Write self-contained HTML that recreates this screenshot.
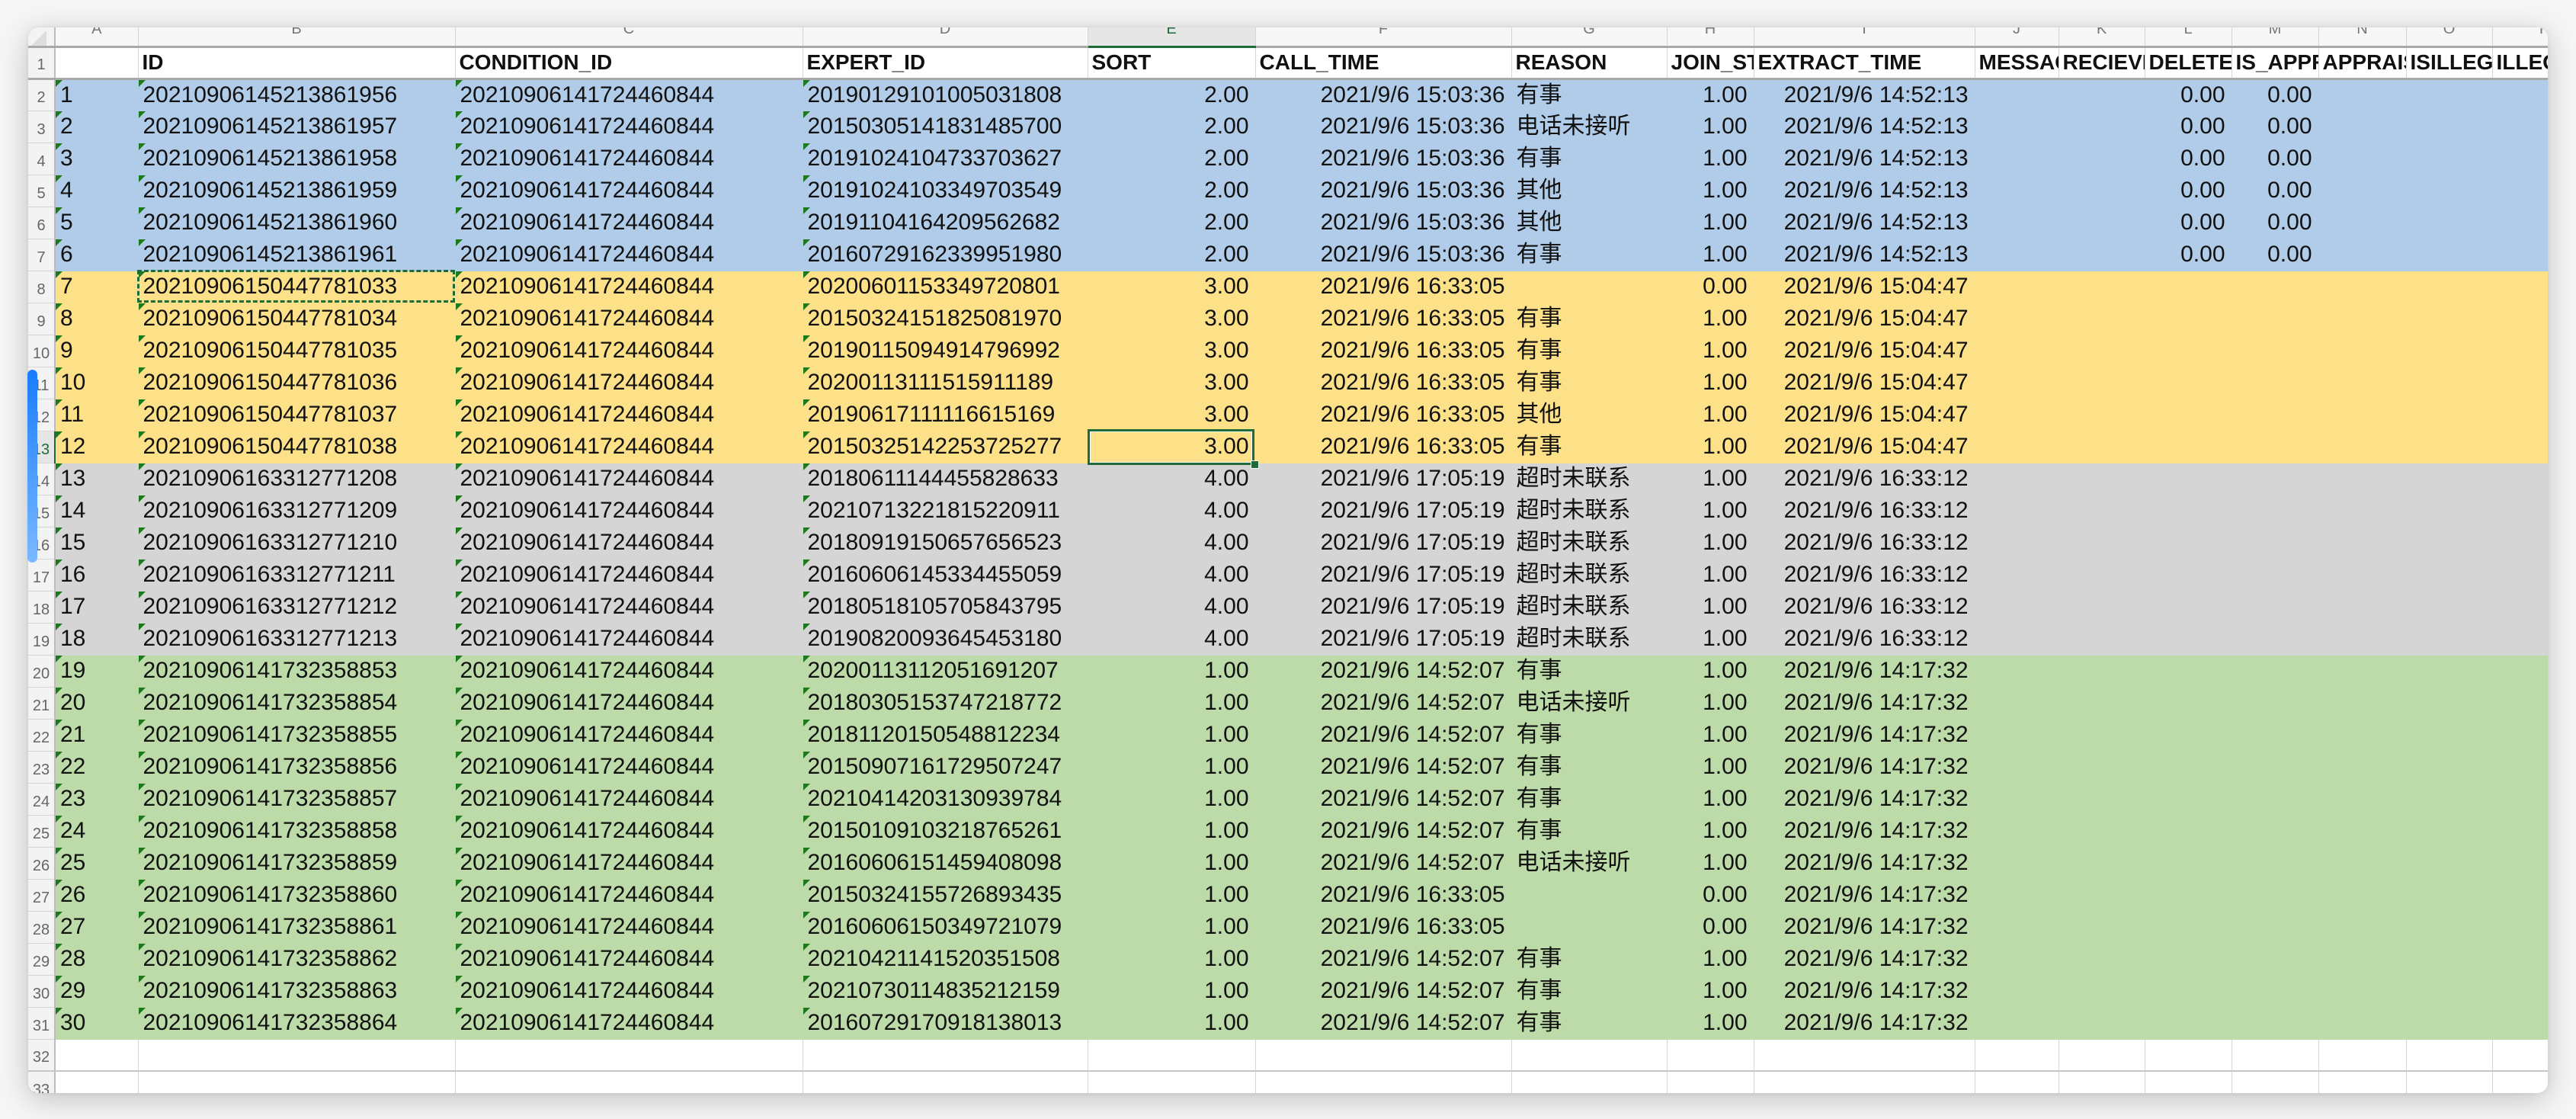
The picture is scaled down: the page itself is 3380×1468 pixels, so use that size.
<!DOCTYPE html>
<html><head><meta charset="utf-8">
<style>
html,body{margin:0;padding:0;background:#f6f6f6;width:3380px;height:1468px;overflow:hidden}
#win{position:absolute;left:37px;top:36px;width:3306px;height:1398px;background:#fff;border-radius:14px;overflow:hidden;box-shadow:0 8px 40px rgba(0,0,0,.22),0 0 6px rgba(0,0,0,.08)}
table{border-collapse:collapse;table-layout:fixed;width:3370px;font-family:"Liberation Sans","Noto Sans CJK SC",sans-serif;font-size:30px;color:#111}
td,th{padding:0 6px;white-space:nowrap;overflow:hidden;border-right:1px solid #d6d6d6;border-bottom:1px solid #d6d6d6;height:0;line-height:30px;position:relative;font-weight:normal;text-align:left;vertical-align:middle}
tr{height:42px}
th{background:#f3f3f3;color:#666;font-size:20px;text-align:center;vertical-align:bottom;line-height:20px;padding:0 0 7px 0;border-right:2px solid #bcbcbc}
tr.c{height:25px}
tr.c td{line-height:20px;background:#f7f7f7;color:#777;font-size:20px;text-align:center;border-bottom:3px solid #a9a9a9;vertical-align:top;padding:0}
tr.c td span{position:relative;top:-8px}
tr.c th{border-bottom:3px solid #a9a9a9;background:#f3f3f3;padding:0}
tr.c td.se{background:#e6e6e6;color:#1e6b3a;border-bottom:3px solid #1e6b3a}
tr.h td{font-weight:bold;font-size:28px;border-bottom:3px solid #a9a9a9;padding-left:5px}
tr.h th{border-bottom:3px solid #a9a9a9}
td.r{text-align:right;padding-right:8px}
td.t::before{content:"";position:absolute;left:0;top:0;border-top:9px solid #1c7a1c;border-right:9px solid transparent}
tr.b td{background:#b0cce8;border-color:#b0cce8}
tr.y td{background:#fde188;border-color:#fde188}
tr.g td{background:#d5d5d5;border-color:#d5d5d5}
tr.n td{background:#bcdba8;border-color:#bcdba8}
th.sr{color:#1e6b3a;border-right:2px solid #1e6b3a;background:#e6e6e6}
tr.w32 td,tr.w32 th{border-bottom:2px solid #c6c6c6}
#bar{position:absolute;left:36px;top:485px;width:13px;height:253px;border-radius:7px;background:linear-gradient(#1a7cff,#7ab9ff)}
#dash{position:absolute;left:180px;top:354px;width:411px;height:37px;border:3px dashed #1e6b3a}
#sel{position:absolute;left:1427px;top:563px;width:213px;height:41px;border:3px solid #1f6b3a;box-shadow:inset 0 0 0 1px #fff}
#hdl{position:absolute;left:1641px;top:604px;width:9px;height:9px;background:#1f6b3a;border:1px solid #fff}
#corner{position:absolute;left:4px;top:4px;width:0;height:0;border-bottom:20px solid #ddd;border-left:20px solid transparent;z-index:2}
</style></head><body>
<div id="win">
<div id="corner"></div>
<table>
<colgroup><col style="width:35px"><col style="width:109px"><col style="width:416px"><col style="width:456px"><col style="width:374px"><col style="width:220px"><col style="width:336px"><col style="width:204px"><col style="width:114px"><col style="width:290px"><col style="width:110px"><col style="width:113px"><col style="width:114px"><col style="width:114px"><col style="width:115px"><col style="width:113px"><col style="width:137px"></colgroup>
<tr class="c"><th></th><td><span>A</span></td><td><span>B</span></td><td><span>C</span></td><td><span>D</span></td><td class="se"><span>E</span></td><td><span>F</span></td><td><span>G</span></td><td><span>H</span></td><td><span>I</span></td><td><span>J</span></td><td><span>K</span></td><td><span>L</span></td><td><span>M</span></td><td><span>N</span></td><td><span>O</span></td><td><span>P</span></td></tr>
<tr class="h"><th>1</th><td></td><td>ID</td><td>CONDITION_ID</td><td>EXPERT_ID</td><td>SORT</td><td>CALL_TIME</td><td>REASON</td><td>JOIN_STATUS</td><td>EXTRACT_TIME</td><td>MESSAGE</td><td>RECIEVE_</td><td>DELETE_FLAG</td><td>IS_APPRAISE</td><td>APPRAISE</td><td>ISILLEGAL</td><td>ILLEGAL</td></tr>
<tr class="b"><th>2</th><td class="t">1</td><td class="t">20210906145213861956</td><td class="t">20210906141724460844</td><td class="t">20190129101005031808</td><td class="r">2.00</td><td class="r">2021/9/6 15:03:36</td><td>有事</td><td class="r">1.00</td><td class="r">2021/9/6 14:52:13</td><td></td><td></td><td class="r">0.00</td><td class="r">0.00</td><td></td><td></td><td></td></tr>
<tr class="b"><th>3</th><td class="t">2</td><td class="t">20210906145213861957</td><td class="t">20210906141724460844</td><td class="t">20150305141831485700</td><td class="r">2.00</td><td class="r">2021/9/6 15:03:36</td><td>电话未接听</td><td class="r">1.00</td><td class="r">2021/9/6 14:52:13</td><td></td><td></td><td class="r">0.00</td><td class="r">0.00</td><td></td><td></td><td></td></tr>
<tr class="b"><th>4</th><td class="t">3</td><td class="t">20210906145213861958</td><td class="t">20210906141724460844</td><td class="t">20191024104733703627</td><td class="r">2.00</td><td class="r">2021/9/6 15:03:36</td><td>有事</td><td class="r">1.00</td><td class="r">2021/9/6 14:52:13</td><td></td><td></td><td class="r">0.00</td><td class="r">0.00</td><td></td><td></td><td></td></tr>
<tr class="b"><th>5</th><td class="t">4</td><td class="t">20210906145213861959</td><td class="t">20210906141724460844</td><td class="t">20191024103349703549</td><td class="r">2.00</td><td class="r">2021/9/6 15:03:36</td><td>其他</td><td class="r">1.00</td><td class="r">2021/9/6 14:52:13</td><td></td><td></td><td class="r">0.00</td><td class="r">0.00</td><td></td><td></td><td></td></tr>
<tr class="b"><th>6</th><td class="t">5</td><td class="t">20210906145213861960</td><td class="t">20210906141724460844</td><td class="t">20191104164209562682</td><td class="r">2.00</td><td class="r">2021/9/6 15:03:36</td><td>其他</td><td class="r">1.00</td><td class="r">2021/9/6 14:52:13</td><td></td><td></td><td class="r">0.00</td><td class="r">0.00</td><td></td><td></td><td></td></tr>
<tr class="b"><th>7</th><td class="t">6</td><td class="t">20210906145213861961</td><td class="t">20210906141724460844</td><td class="t">20160729162339951980</td><td class="r">2.00</td><td class="r">2021/9/6 15:03:36</td><td>有事</td><td class="r">1.00</td><td class="r">2021/9/6 14:52:13</td><td></td><td></td><td class="r">0.00</td><td class="r">0.00</td><td></td><td></td><td></td></tr>
<tr class="y"><th>8</th><td class="t">7</td><td class="t">20210906150447781033</td><td class="t">20210906141724460844</td><td class="t">20200601153349720801</td><td class="r">3.00</td><td class="r">2021/9/6 16:33:05</td><td></td><td class="r">0.00</td><td class="r">2021/9/6 15:04:47</td><td></td><td></td><td></td><td></td><td></td><td></td><td></td></tr>
<tr class="y"><th>9</th><td class="t">8</td><td class="t">20210906150447781034</td><td class="t">20210906141724460844</td><td class="t">20150324151825081970</td><td class="r">3.00</td><td class="r">2021/9/6 16:33:05</td><td>有事</td><td class="r">1.00</td><td class="r">2021/9/6 15:04:47</td><td></td><td></td><td></td><td></td><td></td><td></td><td></td></tr>
<tr class="y"><th>10</th><td class="t">9</td><td class="t">20210906150447781035</td><td class="t">20210906141724460844</td><td class="t">20190115094914796992</td><td class="r">3.00</td><td class="r">2021/9/6 16:33:05</td><td>有事</td><td class="r">1.00</td><td class="r">2021/9/6 15:04:47</td><td></td><td></td><td></td><td></td><td></td><td></td><td></td></tr>
<tr class="y"><th>11</th><td class="t">10</td><td class="t">20210906150447781036</td><td class="t">20210906141724460844</td><td class="t">20200113111515911189</td><td class="r">3.00</td><td class="r">2021/9/6 16:33:05</td><td>有事</td><td class="r">1.00</td><td class="r">2021/9/6 15:04:47</td><td></td><td></td><td></td><td></td><td></td><td></td><td></td></tr>
<tr class="y"><th>12</th><td class="t">11</td><td class="t">20210906150447781037</td><td class="t">20210906141724460844</td><td class="t">20190617111116615169</td><td class="r">3.00</td><td class="r">2021/9/6 16:33:05</td><td>其他</td><td class="r">1.00</td><td class="r">2021/9/6 15:04:47</td><td></td><td></td><td></td><td></td><td></td><td></td><td></td></tr>
<tr class="y"><th class="sr">13</th><td class="t">12</td><td class="t">20210906150447781038</td><td class="t">20210906141724460844</td><td class="t">20150325142253725277</td><td class="r">3.00</td><td class="r">2021/9/6 16:33:05</td><td>有事</td><td class="r">1.00</td><td class="r">2021/9/6 15:04:47</td><td></td><td></td><td></td><td></td><td></td><td></td><td></td></tr>
<tr class="g"><th>14</th><td class="t">13</td><td class="t">20210906163312771208</td><td class="t">20210906141724460844</td><td class="t">20180611144455828633</td><td class="r">4.00</td><td class="r">2021/9/6 17:05:19</td><td>超时未联系</td><td class="r">1.00</td><td class="r">2021/9/6 16:33:12</td><td></td><td></td><td></td><td></td><td></td><td></td><td></td></tr>
<tr class="g"><th>15</th><td class="t">14</td><td class="t">20210906163312771209</td><td class="t">20210906141724460844</td><td class="t">20210713221815220911</td><td class="r">4.00</td><td class="r">2021/9/6 17:05:19</td><td>超时未联系</td><td class="r">1.00</td><td class="r">2021/9/6 16:33:12</td><td></td><td></td><td></td><td></td><td></td><td></td><td></td></tr>
<tr class="g"><th>16</th><td class="t">15</td><td class="t">20210906163312771210</td><td class="t">20210906141724460844</td><td class="t">20180919150657656523</td><td class="r">4.00</td><td class="r">2021/9/6 17:05:19</td><td>超时未联系</td><td class="r">1.00</td><td class="r">2021/9/6 16:33:12</td><td></td><td></td><td></td><td></td><td></td><td></td><td></td></tr>
<tr class="g"><th>17</th><td class="t">16</td><td class="t">20210906163312771211</td><td class="t">20210906141724460844</td><td class="t">20160606145334455059</td><td class="r">4.00</td><td class="r">2021/9/6 17:05:19</td><td>超时未联系</td><td class="r">1.00</td><td class="r">2021/9/6 16:33:12</td><td></td><td></td><td></td><td></td><td></td><td></td><td></td></tr>
<tr class="g"><th>18</th><td class="t">17</td><td class="t">20210906163312771212</td><td class="t">20210906141724460844</td><td class="t">20180518105705843795</td><td class="r">4.00</td><td class="r">2021/9/6 17:05:19</td><td>超时未联系</td><td class="r">1.00</td><td class="r">2021/9/6 16:33:12</td><td></td><td></td><td></td><td></td><td></td><td></td><td></td></tr>
<tr class="g"><th>19</th><td class="t">18</td><td class="t">20210906163312771213</td><td class="t">20210906141724460844</td><td class="t">20190820093645453180</td><td class="r">4.00</td><td class="r">2021/9/6 17:05:19</td><td>超时未联系</td><td class="r">1.00</td><td class="r">2021/9/6 16:33:12</td><td></td><td></td><td></td><td></td><td></td><td></td><td></td></tr>
<tr class="n"><th>20</th><td class="t">19</td><td class="t">20210906141732358853</td><td class="t">20210906141724460844</td><td class="t">20200113112051691207</td><td class="r">1.00</td><td class="r">2021/9/6 14:52:07</td><td>有事</td><td class="r">1.00</td><td class="r">2021/9/6 14:17:32</td><td></td><td></td><td></td><td></td><td></td><td></td><td></td></tr>
<tr class="n"><th>21</th><td class="t">20</td><td class="t">20210906141732358854</td><td class="t">20210906141724460844</td><td class="t">20180305153747218772</td><td class="r">1.00</td><td class="r">2021/9/6 14:52:07</td><td>电话未接听</td><td class="r">1.00</td><td class="r">2021/9/6 14:17:32</td><td></td><td></td><td></td><td></td><td></td><td></td><td></td></tr>
<tr class="n"><th>22</th><td class="t">21</td><td class="t">20210906141732358855</td><td class="t">20210906141724460844</td><td class="t">20181120150548812234</td><td class="r">1.00</td><td class="r">2021/9/6 14:52:07</td><td>有事</td><td class="r">1.00</td><td class="r">2021/9/6 14:17:32</td><td></td><td></td><td></td><td></td><td></td><td></td><td></td></tr>
<tr class="n"><th>23</th><td class="t">22</td><td class="t">20210906141732358856</td><td class="t">20210906141724460844</td><td class="t">20150907161729507247</td><td class="r">1.00</td><td class="r">2021/9/6 14:52:07</td><td>有事</td><td class="r">1.00</td><td class="r">2021/9/6 14:17:32</td><td></td><td></td><td></td><td></td><td></td><td></td><td></td></tr>
<tr class="n"><th>24</th><td class="t">23</td><td class="t">20210906141732358857</td><td class="t">20210906141724460844</td><td class="t">20210414203130939784</td><td class="r">1.00</td><td class="r">2021/9/6 14:52:07</td><td>有事</td><td class="r">1.00</td><td class="r">2021/9/6 14:17:32</td><td></td><td></td><td></td><td></td><td></td><td></td><td></td></tr>
<tr class="n"><th>25</th><td class="t">24</td><td class="t">20210906141732358858</td><td class="t">20210906141724460844</td><td class="t">20150109103218765261</td><td class="r">1.00</td><td class="r">2021/9/6 14:52:07</td><td>有事</td><td class="r">1.00</td><td class="r">2021/9/6 14:17:32</td><td></td><td></td><td></td><td></td><td></td><td></td><td></td></tr>
<tr class="n"><th>26</th><td class="t">25</td><td class="t">20210906141732358859</td><td class="t">20210906141724460844</td><td class="t">20160606151459408098</td><td class="r">1.00</td><td class="r">2021/9/6 14:52:07</td><td>电话未接听</td><td class="r">1.00</td><td class="r">2021/9/6 14:17:32</td><td></td><td></td><td></td><td></td><td></td><td></td><td></td></tr>
<tr class="n"><th>27</th><td class="t">26</td><td class="t">20210906141732358860</td><td class="t">20210906141724460844</td><td class="t">20150324155726893435</td><td class="r">1.00</td><td class="r">2021/9/6 16:33:05</td><td></td><td class="r">0.00</td><td class="r">2021/9/6 14:17:32</td><td></td><td></td><td></td><td></td><td></td><td></td><td></td></tr>
<tr class="n"><th>28</th><td class="t">27</td><td class="t">20210906141732358861</td><td class="t">20210906141724460844</td><td class="t">20160606150349721079</td><td class="r">1.00</td><td class="r">2021/9/6 16:33:05</td><td></td><td class="r">0.00</td><td class="r">2021/9/6 14:17:32</td><td></td><td></td><td></td><td></td><td></td><td></td><td></td></tr>
<tr class="n"><th>29</th><td class="t">28</td><td class="t">20210906141732358862</td><td class="t">20210906141724460844</td><td class="t">20210421141520351508</td><td class="r">1.00</td><td class="r">2021/9/6 14:52:07</td><td>有事</td><td class="r">1.00</td><td class="r">2021/9/6 14:17:32</td><td></td><td></td><td></td><td></td><td></td><td></td><td></td></tr>
<tr class="n"><th>30</th><td class="t">29</td><td class="t">20210906141732358863</td><td class="t">20210906141724460844</td><td class="t">20210730114835212159</td><td class="r">1.00</td><td class="r">2021/9/6 14:52:07</td><td>有事</td><td class="r">1.00</td><td class="r">2021/9/6 14:17:32</td><td></td><td></td><td></td><td></td><td></td><td></td><td></td></tr>
<tr class="n"><th>31</th><td class="t">30</td><td class="t">20210906141732358864</td><td class="t">20210906141724460844</td><td class="t">20160729170918138013</td><td class="r">1.00</td><td class="r">2021/9/6 14:52:07</td><td>有事</td><td class="r">1.00</td><td class="r">2021/9/6 14:17:32</td><td></td><td></td><td></td><td></td><td></td><td></td><td></td></tr>
<tr class="w32"><th>32</th><td></td><td></td><td></td><td></td><td></td><td></td><td></td><td></td><td></td><td></td><td></td><td></td><td></td><td></td><td></td><td></td></tr>
<tr><th>33</th><td></td><td></td><td></td><td></td><td></td><td></td><td></td><td></td><td></td><td></td><td></td><td></td><td></td><td></td><td></td><td></td></tr>
</table>
</div>
<div id="bar"></div>
<div id="dash"></div>
<div id="sel"></div>
<div id="hdl"></div>
</body></html>
